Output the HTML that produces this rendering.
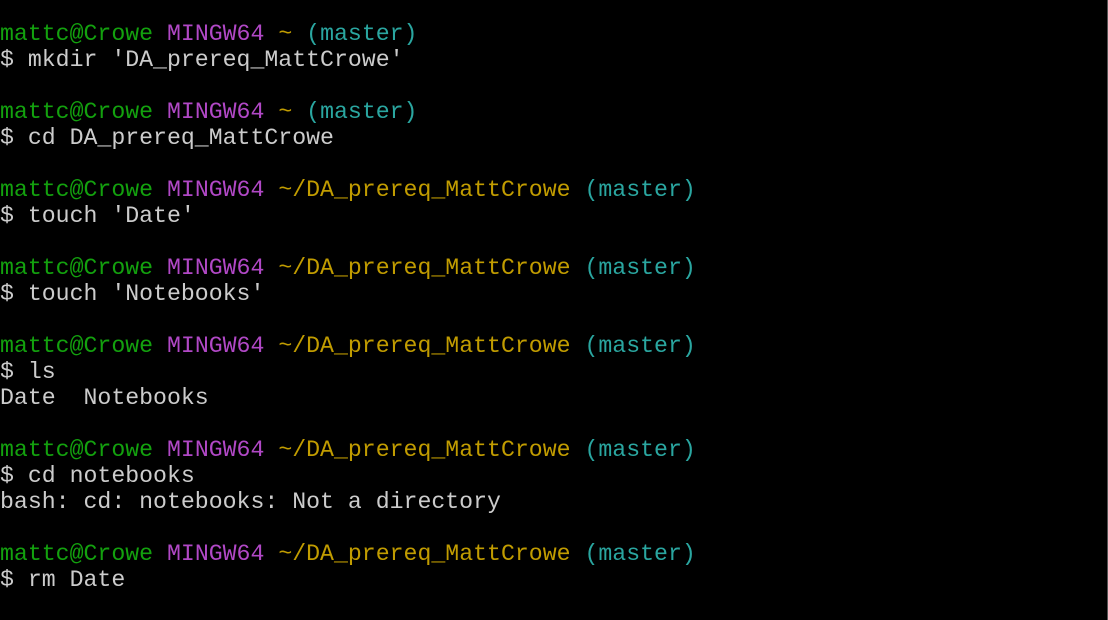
<!DOCTYPE html>
<html><head><meta charset="utf-8"><style>
html,body{margin:0;padding:0;background:#000;}
body{width:1108px;height:620px;overflow:hidden;position:relative;background:#000;}
pre{margin:0;position:absolute;left:0;top:21px;font-family:"Liberation Mono","DejaVu Sans Mono",monospace;font-size:23.2px;line-height:26px;color:#cccccc;white-space:pre;}
.g{color:#13a10e}.m{color:#b148c6}.y{color:#c19c00}.c{color:#2aa6a0}
.edge{position:absolute;right:0;top:0;width:1px;height:620px;background:#555;}
</style></head><body>
<pre><span class="g">mattc@Crowe</span> <span class="m">MINGW64</span> <span class="y">~</span> <span class="c">(master)</span>
$ mkdir 'DA_prereq_MattCrowe'

<span class="g">mattc@Crowe</span> <span class="m">MINGW64</span> <span class="y">~</span> <span class="c">(master)</span>
$ cd DA_prereq_MattCrowe

<span class="g">mattc@Crowe</span> <span class="m">MINGW64</span> <span class="y">~/DA_prereq_MattCrowe</span> <span class="c">(master)</span>
$ touch 'Date'

<span class="g">mattc@Crowe</span> <span class="m">MINGW64</span> <span class="y">~/DA_prereq_MattCrowe</span> <span class="c">(master)</span>
$ touch 'Notebooks'

<span class="g">mattc@Crowe</span> <span class="m">MINGW64</span> <span class="y">~/DA_prereq_MattCrowe</span> <span class="c">(master)</span>
$ ls
Date  Notebooks

<span class="g">mattc@Crowe</span> <span class="m">MINGW64</span> <span class="y">~/DA_prereq_MattCrowe</span> <span class="c">(master)</span>
$ cd notebooks
bash: cd: notebooks: Not a directory

<span class="g">mattc@Crowe</span> <span class="m">MINGW64</span> <span class="y">~/DA_prereq_MattCrowe</span> <span class="c">(master)</span>
$ rm Date</pre>
<div class="edge"></div>
</body></html>
